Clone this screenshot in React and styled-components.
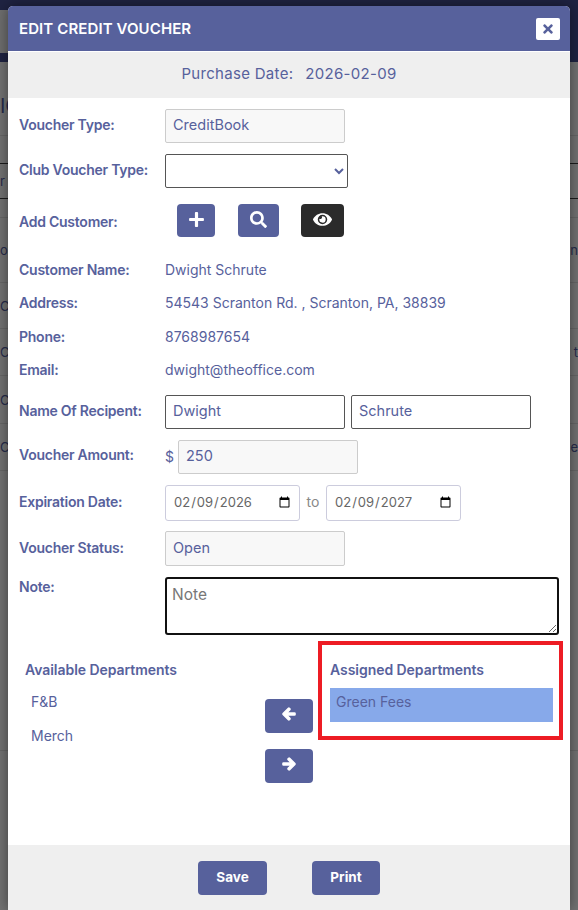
import styled, { createGlobalStyle } from 'styled-components'
import { FaPlus, FaSearch, FaEye, FaArrowLeft, FaArrowRight, FaTimes } from 'react-icons/fa'

const PRIMARY = '#57619c'

const GlobalStyle = createGlobalStyle`
	html, body {
		margin: 0;
		padding: 0;
		height: 910px;
		overflow: hidden;
		background: #727272;
		font-family: Inter, "Liberation Sans", sans-serif;
	}
`

//css
const Page = styled.div`
	position: relative;
	width: 578px;
	height: 910px;
	overflow: hidden;
	background: #727272;
`

const Backdrop = styled.div`
	display: flex;
	flex-direction: column;
`

const NavBar = styled.div`
	height: 62px;
	background: linear-gradient(#1f2342 0, #1f2342 10px, #6e6e6e 10px, #6e6e6e 53px, #1f2342 53px);
`

const RightNavBar = styled.div`
	position: absolute;
	top: 0;
	right: 0;
	width: 10px;
	height: 62px;
	background: #1f2342;
`

const BackRow = styled.div`
	display: flex;
	justify-content: space-between;
	align-items: center;
	box-sizing: border-box;
	height: ${p => p.$h}px;
	padding-top: ${p => p.$pt || 0}px;
	border-bottom: 1px solid ${p => (p.$dark ? '#1c1c1c' : '#666')};
	font-size: ${p => p.$size || 13}px;
	color: #262b4a;
`

const Modal = styled.div`
	position: absolute;
	top: 6px;
	left: 8px;
	width: 562px;
	height: 904px;
	display: flex;
	flex-direction: column;
	background: #fff;
	border-radius: 5px 5px 0 0;
	box-shadow: 0 0 14px rgba(0, 0, 0, 0.45);
	color: ${PRIMARY};
`

const Header = styled.div`
	display: flex;
	justify-content: space-between;
	align-items: center;
	height: 45px;
	padding: 0 10px 0 11px;
	background: ${PRIMARY};
	border-radius: 5px 5px 0 0;
	border-bottom: 1px solid #fff;
`

const Title = styled.h4`
	margin: 0 0 1px;
	font-size: 15px;
	font-weight: 600;
	letter-spacing: 0.1px;
	color: #fff;
`

const CloseButton = styled.button`
	display: flex;
	align-items: center;
	justify-content: center;
	width: 24px;
	height: 22px;
	padding: 0;
	border: none;
	border-radius: 2px;
	background: #fff;
	color: ${PRIMARY};
	font-size: 14px;
`

const DateBar = styled.div`
	display: flex;
	justify-content: center;
	align-items: center;
	gap: 12px;
	height: 46px;
	padding-bottom: 3px;
	box-sizing: border-box;
	background: #efefef;
	font-size: 15px;
	letter-spacing: 0.3px;
`

const Body = styled.div`
	flex: 1;
	display: flex;
	flex-direction: column;
	padding: 11px 11px 0;
	height: 0;
`

const Row = styled.div`
	display: flex;
	align-items: ${p => p.$top ? 'flex-start' : 'center'};
	height: ${p => p.$h}px;
	margin-bottom: ${p => p.$mb || 0}px;
`

const Label = styled.label`
	flex: none;
	width: 146px;
	font-size: 14px;
	font-weight: 600;
	letter-spacing: -0.25px;
	margin-top: ${p => p.$mt || 0}px;
	margin-bottom: ${p => p.$raise || 0}px;
`

const Value = styled.span`
	font-size: 14px;
`

const Input = styled.input`
	box-sizing: border-box;
	width: ${p => p.$w || 180}px;
	height: ${p => p.$h || 34}px;
	padding: 0 7px 3px;
	border: 1px solid ${p => (p.readOnly ? '#ccc' : '#555')};
	border-radius: 2px;
	background: ${p => (p.readOnly ? '#f8f8f8' : '#fff')};
	color: ${PRIMARY};
	font-family: inherit;
	font-size: 14.5px;
	outline: none;
	margin-left: ${p => p.$ml || 0}px;
`

const DateInput = styled.input`
	box-sizing: border-box;
	width: 135px;
	height: 36px;
	padding: 0 6px 2px 7px;
	border: 1px solid #ccd;
	border-radius: 3px;
	background: #fff;
	color: #666;
	font-family: inherit;
	font-size: 13px;
	outline: none;
`

const Select = styled.select`
	box-sizing: border-box;
	width: 183px;
	height: 34px;
	border: 1px solid #555;
	border-radius: 2px;
	background: #fff;
	color: ${PRIMARY};
	font-size: 14px;
`

const Note = styled.textarea`
	box-sizing: border-box;
	width: 394px;
	height: 58px;
	padding: 6px 5px;
	border: 2px solid #111;
	border-radius: 3px;
	font-family: inherit;
	font-size: 15.5px;
	outline: none;
	&::placeholder {
		color: #777;
	}
`

const IconButton = styled.button`
	display: flex;
	align-items: center;
	justify-content: center;
	box-sizing: border-box;
	width: ${p => p.$w}px;
	height: 33px;
	margin-left: ${p => p.$ml}px;
	padding: 0 0 2px;
	border: none;
	border-radius: 4px;
	background: ${p => p.$bg || PRIMARY};
	color: #fff;
	font-size: ${p => p.$size || 16}px;
`

const ToWord = styled.span`
	width: 26px;
	padding-bottom: 3px;
	text-align: center;
	font-size: 14px;
	color: #888;
`

const Dollar = styled.span`
	width: 13px;
	padding-bottom: 2px;
	font-size: 14px;
`

const Departments = styled.div`
	display: flex;
	margin-top: 5px;
	margin-left: -1px;
`

const AvailableColumn = styled.div`
	flex: none;
	box-sizing: border-box;
	width: 247px;
	padding: 21px 0 0 7px;
`

const ColumnTitle = styled.div`
	font-size: 14px;
	font-weight: 600;
	letter-spacing: -0.05px;
	height: ${p => p.$h || 19}px;
`

const DepartmentList = styled.div`
	margin-top: 7px;
`

const DepartmentItem = styled.div`
	box-sizing: border-box;
	height: 34px;
	padding: 6px;
	font-size: 14px;
	${p => p.$selected && 'background: #87a9ea; padding-top: 5px;'}
`

const ArrowColumn = styled.div`
	flex: none;
	display: flex;
	flex-direction: column;
	gap: 16px;
	width: 53px;
	padding-top: 59px;
`

const ArrowButton = styled(IconButton)`
	width: 48px;
	height: 34px;
	margin: 0;
	padding-bottom: 5px;
	font-size: 14px;
	svg {
		stroke: #fff;
		stroke-width: 50px;
	}
`

const AssignedBox = styled.div`
	flex: none;
	box-sizing: border-box;
	width: 245px;
	height: 99px;
	margin-top: 1px;
	padding: 16px 6px 0 8px;
	border: 4px solid #ed1c24;
`

const Footer = styled.div`
	display: flex;
	justify-content: center;
	gap: 45px;
	height: 65px;
	padding: 16px 0 0;
	box-sizing: border-box;
	margin-top: auto;
	background: #efefef;
`

const FooterButton = styled.button`
	width: ${p => p.$w}px;
	height: 34px;
	padding: 0 0 3px;
	border: none;
	border-radius: 4px;
	background: ${PRIMARY};
	color: #fff;
	font-family: inherit;
	font-size: 13.5px;
	font-weight: 700;
`

const backRows = [
	{ h: 74, l: 'IC', size: 20, pt: 14 },
	{ h: 28, dark: true, l: '' },
	{ h: 35, dark: true, l: 'r' },
	{ h: 19, l: '' },
	{ h: 65, l: 'ou', r: 'n' },
	{ h: 46, l: 'Cr' },
	{ h: 47, l: 'Cr', r: 't' },
	{ h: 48, l: 'Cr' },
	{ h: 47, l: 'Cr', r: 'e' },
	{ h: 280, l: '' },
]

const App = () => {
	return (
		<Page>
			<GlobalStyle />
			{/* page behind the modal */}
			<Backdrop>
				<NavBar />
				{backRows.map((row, i) => (
					<BackRow key={i} $h={row.h} $dark={row.dark} $size={row.size} $pt={row.pt}>
						<span>{row.l}</span>
						<span>{row.r}</span>
					</BackRow>
				))}
			</Backdrop>
			<RightNavBar />

			<Modal>
				<Header>
					<Title>EDIT CREDIT VOUCHER</Title>
					<CloseButton><FaTimes /></CloseButton>
				</Header>
				<DateBar>
					<span>Purchase Date:</span>
					<span>2026-02-09</span>
				</DateBar>
				<Body>
					<Row $h={34} $mb={11}>
						<Label $raise={4}>Voucher Type:</Label>
						<Input readOnly value='CreditBook' />
					</Row>
					<Row $h={34} $mb={16}>
						<Label $raise={4}>Club Voucher Type:</Label>
						<Select />
					</Row>
					<Row $h={33} $mb={15}>
						<Label $mt={2}>Add Customer:</Label>
						<IconButton $w={38} $ml={12} $size={17}><FaPlus /></IconButton>
						<IconButton $w={41} $ml={23} $size={17}><FaSearch /></IconButton>
						<IconButton $w={43} $ml={22} $bg='#2b2b2b' $size={19}><FaEye /></IconButton>
					</Row>
					<Row $h={34}>
						<Label>Customer Name:</Label>
						<Value>Dwight Schrute</Value>
					</Row>
					<Row $h={33}>
						<Label>Address:</Label>
						<Value>54543 Scranton Rd. , Scranton, PA, 38839</Value>
					</Row>
					<Row $h={34}>
						<Label>Phone:</Label>
						<Value>8768987654</Value>
					</Row>
					<Row $h={33} $mb={9}>
						<Label>Email:</Label>
						<Value>dwight@theoffice.com</Value>
					</Row>
					<Row $h={34} $mb={11}>
						<Label $raise={4}>Name Of Recipent:</Label>
						<Input value='Dwight' onChange={() => {}} />
						<Input value='Schrute' onChange={() => {}} $ml={6} />
					</Row>
					<Row $h={34} $mb={11}>
						<Label $raise={5}>Voucher Amount:</Label>
						<Dollar>$</Dollar>
						<Input readOnly value='250' />
					</Row>
					<Row $h={36} $mb={10}>
						<Label $raise={3}>Expiration Date:</Label>
						<DateInput type='date' defaultValue='2026-02-09' />
						<ToWord>to</ToWord>
						<DateInput type='date' defaultValue='2027-02-09' />
					</Row>
					<Row $h={35} $mb={11}>
						<Label $raise={3}>Voucher Status:</Label>
						<Input readOnly value='Open' $h={35} />
					</Row>
					<Row $h={58} $top>
						<Label $mt={1}>Note:</Label>
						<Note placeholder='Note' />
					</Row>
					<Departments>
						<AvailableColumn>
							<ColumnTitle>Available Departments</ColumnTitle>
							<DepartmentList>
								<DepartmentItem>F&amp;B</DepartmentItem>
								<DepartmentItem>Merch</DepartmentItem>
							</DepartmentList>
						</AvailableColumn>
						<ArrowColumn>
							<ArrowButton><FaArrowLeft /></ArrowButton>
							<ArrowButton><FaArrowRight /></ArrowButton>
						</ArrowColumn>
						<AssignedBox>
							<ColumnTitle $h={27}>Assigned Departments</ColumnTitle>
							<DepartmentItem $selected>Green Fees</DepartmentItem>
						</AssignedBox>
					</Departments>
				</Body>
				<Footer>
					<FooterButton $w={69}>Save</FooterButton>
					<FooterButton $w={68}>Print</FooterButton>
				</Footer>
			</Modal>
		</Page>
	)
}

export default App
